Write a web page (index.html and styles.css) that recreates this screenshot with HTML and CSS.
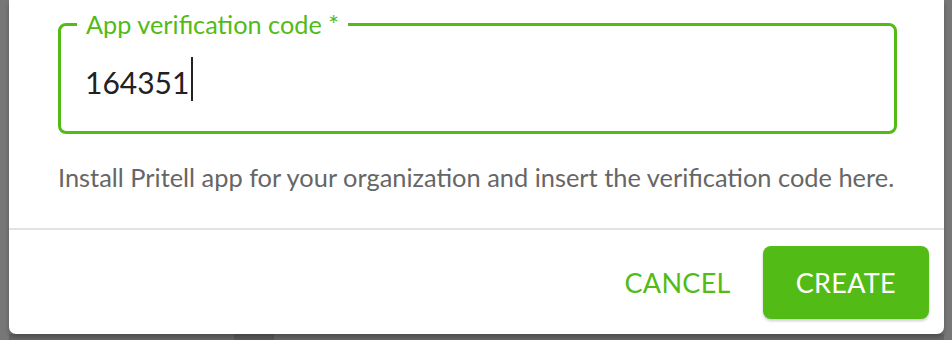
FILE: index.html
```html
<!DOCTYPE html>
<html lang="en">
<head>
<meta charset="utf-8">
<title>App verification</title>
<link rel="stylesheet" href="styles.css">
</head>
<body>
<div class="page">
  <div class="dialog">
    <div class="content">
      <fieldset class="field">
        <legend class="field-label">App verification code *</legend>
        <div class="field-value"><span class="value-text">164351</span><span class="caret"></span></div>
      </fieldset>
      <p class="helper">Install Pritell app for your organization and insert the verification code here.</p>
    </div>
    <div class="actions">
      <button class="btn btn-text">CANCEL</button>
      <button class="btn btn-contained">CREATE</button>
    </div>
  </div>
  <div class="backdrop-strip"><div class="strip-block"></div></div>
</div>
</body>
</html>
```

FILE: styles.css
```css
html, body {
  margin: 0;
  padding: 0;
}
body {
  background: #777777;
  font-family: Lato, "Open Sans", sans-serif;
  width: 952px;
  height: 340px;
  overflow: hidden;
}
.page {
  box-sizing: border-box;
  height: 340px;
  padding: 0 8px 0 9px;
  display: flex;
  flex-direction: column;
}
.dialog {
  background: #ffffff;
  border-radius: 0 0 7px 7px;
  box-shadow: 0 3px 5px rgba(0, 0, 0, 0.25);
  position: relative;
  z-index: 1;
}
.content {
  padding: 9px 47px 34px 49px;
  border-bottom: 2px solid #e3e3e3;
}
.field {
  margin: 0;
  min-width: 0;
  padding: 17px 24px 30px 24px;
  border: 3px solid #53bb16;
  border-radius: 8px;
}
.field-label {
  margin-left: -8px;
  padding: 0 9px;
  font-size: 25.3px;
  line-height: 31px;
  color: #53bb16;
}
.field-value {
  display: flex;
  align-items: flex-start;
  height: 44px;
}
.value-text {
  font-size: 30px;
  line-height: 1;
  margin-top: 10px;
  color: #222222;
}
.caret {
  width: 2px;
  height: 44px;
  background: #222222;
  margin-left: 2px;
}
.helper {
  margin: 26px 0 0 0;
  font-size: 25.4px;
  line-height: 34px;
  color: #666666;
  white-space: nowrap;
}
.actions {
  display: flex;
  justify-content: flex-end;
  gap: 16px;
  padding: 16px 15px 15px 16px;
}
.btn {
  font-family: Lato, "Open Sans", sans-serif;
  font-size: 27px;
  height: 73px;
  border: none;
  border-radius: 8px;
  letter-spacing: 0.3px;
  cursor: pointer;
}
.btn-text {
  background: transparent;
  color: #53bb16;
  padding: 0 16px;
}
.btn-contained {
  background: #53bb16;
  color: #ffffff;
  padding: 0 33px;
  box-shadow: 0 2px 3px rgba(0, 0, 0, 0.2);
}
.backdrop-strip {
  flex: 1;
  background: #666666;
}
.strip-block {
  width: 40px;
  height: 100%;
  margin-left: 225px;
  background: #5a5a5a;
}
```
